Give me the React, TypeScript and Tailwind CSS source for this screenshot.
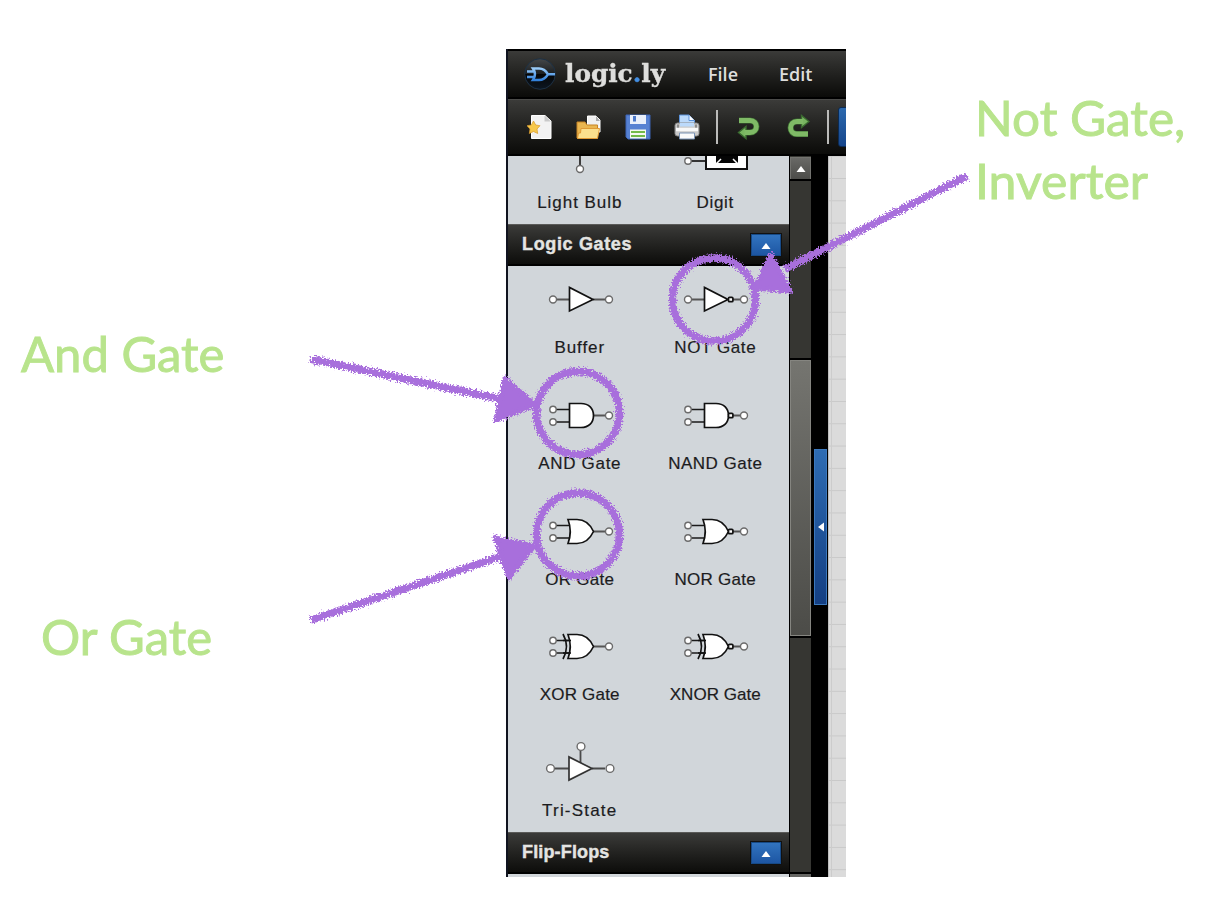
import type { ReactNode } from "react";

type Kind = "buffer" | "not" | "and" | "nand" | "or" | "nor" | "xor" | "xnor" | "tri";

const gates: { kind: Kind; label: string; tracking: string }[] = [
  { kind: "buffer", label: "Buffer", tracking: "tracking-[0.95px]" },
  { kind: "not", label: "NOT Gate", tracking: "tracking-[0.6px]" },
  { kind: "and", label: "AND Gate", tracking: "tracking-[0.7px]" },
  { kind: "nand", label: "NAND Gate", tracking: "tracking-[0.5px]" },
  { kind: "or", label: "OR Gate", tracking: "tracking-[0.3px]" },
  { kind: "nor", label: "NOR Gate", tracking: "tracking-[0.25px]" },
  { kind: "xor", label: "XOR Gate", tracking: "tracking-[0.2px]" },
  { kind: "xnor", label: "XNOR Gate", tracking: "tracking-[0.05px]" },
  { kind: "tri", label: "Tri-State", tracking: "tracking-[1.2px]" },
];

function Pin({ x, y, r = 3.5 }: { x: number; y: number; r?: number }) {
  return <circle cx={x} cy={y} r={r} fill="#fff" stroke="#6b6b6b" strokeWidth="1.4" />;
}

function GateIcon({ kind }: { kind: Kind }) {
  const negated = kind === "not" || kind === "nand" || kind === "nor" || kind === "xnor";
  const single = kind === "buffer" || kind === "not";
  const curved = kind === "or" || kind === "nor" || kind === "xor" || kind === "xnor";
  const exclusive = kind === "xor" || kind === "xnor";

  if (kind === "tri") {
    return (
      <svg width="70" height="40" viewBox="0 0 70 40" className="overflow-visible">
        <path d="M10 26.5H24M47 26.5H60M35.500 8V21" stroke="#4a4a4a" strokeWidth="1.8" />
        <path d="M24 15V38L47 26.500Z" fill="#fff" stroke="#333" strokeWidth="1.7" />
        <Pin x={5.5} y={26.5} r={3.9} />
        <Pin x={65} y={26.5} r={3.9} />
        <Pin x={36} y={4.500} r={3.9} />
      </svg>
    );
  }

  return (
    <svg width="70" height="40" viewBox="0 0 70 40" className="overflow-visible">
      <path d="M48 20.5H61" stroke="#555" strokeWidth="2" />
      {single ? (
        <path d="M11 20.500H24" stroke="#555" strokeWidth="2" />
      ) : (
        <path d="M11 14.500H26M11 27H26" stroke="#1a1a1a" strokeWidth="1.7" />
      )}
      {single && <path d="M24.500 8.500V32L48 20.500Z" fill="#fff" stroke="#111" strokeWidth="1.7" />}
      {!single && !curved && (
        <path d="M24.500 8.500H36C44 8.500 48.500 13.500 48.500 20.500S44 32.500 36 32.500H24.500Z" fill="#fff" stroke="#111" strokeWidth="1.7" />
      )}
      {curved && (
        <path d="M23 8.500H32C40 8.500 45 13 48.500 20.500C45 28 40 32.500 32 32.500H23Q27.500 20.500 23 8.500Z" fill="#fff" stroke="#111" strokeWidth="1.7" />
      )}
      {exclusive && <path d="M18 8Q25 20.500 18 33" fill="none" stroke="#111" strokeWidth="1.7" />}
      {exclusive && <path d="M18 14.500H26M18 27H26" stroke="#111" strokeWidth="1.7" />}
      {negated && <rect x="48.500" y="18.300" width="4.400" height="4.400" rx="1" fill="#fff" stroke="#111" strokeWidth="1.700" />}
      {single ? <Pin x={8} y={20.5} /> : (
        <>
          <Pin x={8} y={14.5} r={3.2} />
          <Pin x={8} y={27} r={3.2} />
        </>
      )}
      <Pin x={64} y={20.5} />
    </svg>
  );
}

function ItemLabel({ children, tracking }: { children: ReactNode; tracking: string }) {
  return <span className={`h-5 whitespace-nowrap text-[17px] leading-5 text-[#1c1c1e] [-webkit-text-stroke:0.2px_#1c1c1e] ${tracking}`}>{children}</span>;
}

function SectionHeader({ title, tracking }: { title: string; tracking: string }) {
  return (
    <div className="flex h-[42px] shrink-0 items-center justify-between border-t border-b-2 border-t-[#5a5a58] border-b-black bg-linear-to-b from-[#3b3b39] to-[#0d0d0b] pl-3.5 pr-2">
      <span className={`text-[18px] font-bold text-[#e4e4e2] [-webkit-text-stroke:0.4px_#e4e4e2] ${tracking}`}>{title}</span>
      <span className="flex h-[22px] w-[30px] items-center justify-center border border-[#174a86] bg-linear-to-b from-[#3274bf] to-[#1d56a3] outline outline-[#111]">
        <svg width="10" height="6" viewBox="0 0 10 6" className="mt-0.5"><path d="M5 0L9.500 6H.5Z" fill="#fff" /></svg>
      </span>
    </div>
  );
}

function Header() {
  return (
    <div className="flex h-[50px] shrink-0 items-center border-y-2 border-black bg-linear-to-b from-[#3b3b39] to-[#0b0b09] pl-[16px]">
      <svg width="32" height="32" viewBox="0 0 32 32" className="shrink-0">
        <defs>
          <linearGradient id="badge" x2="0" y2="1"><stop stopColor="#45484a" /><stop offset=".5" stopColor="#1b1e20" /><stop offset=".5" stopColor="#050607" /><stop offset="1" stopColor="#0d1722" /></linearGradient>
          <linearGradient id="gate" x1="0" y1="10" x2="0" y2="22" gradientUnits="userSpaceOnUse"><stop stopColor="#9ccdf9" /><stop offset="1" stopColor="#3382dc" /></linearGradient>
        </defs>
        <circle cx="16" cy="16" r="15.300" fill="url(#badge)" stroke="#1d3145" />
        <path d="M3 13.500H11M3 19H11M23 16.300H31M9 10.500H15C19 10.500 22 13 24 16.300C22 19.500 19 22 15 22H9Q13 16.300 9 10.500Z" fill="none" stroke="url(#gate)" strokeWidth="2.500" />
      </svg>
      <div className="ml-[9px] w-[101px] shrink-0">
        <span className="inline-block origin-left scale-x-[.99] whitespace-nowrap font-['DejaVu_Serif'] text-[25px] font-bold leading-[30px] text-[#dededc] [-webkit-text-stroke:0.4px]">
          logic<span className="text-[#438ee2]">.</span>ly
        </span>
      </div>
      <span className="ml-[42px] w-[71px] shrink-0 font-['Open_Sans'] text-[18px] font-semibold text-[#dededc]">File</span>
      <span className="shrink-0 font-['Open_Sans'] text-[18px] font-semibold text-[#dededc]">Edit</span>
    </div>
  );
}

function TurnArrow({ line, head }: { line: string; head: string }) {
  return (
    <svg width="24" height="26" viewBox="0 0 24 26" className="shrink-0">
      <path d={line} fill="none" stroke="#3a6a30" strokeWidth="6.2" />
      <path d={head} fill="#78b560" stroke="#3a6a30" strokeWidth="1.4" />
      <path d={line} fill="none" stroke="#7fba66" strokeWidth="4.8" />
    </svg>
  );
}

function Toolbar() {
  return (
    <div className="flex h-[57px] shrink-0 items-center overflow-hidden border-b-2 border-t border-b-black border-t-[#4b4b49] bg-linear-to-b from-[#3b3b39] to-[#0b0b09] pl-[19px]">
      <svg width="25" height="26" viewBox="0 0 25 26" className="shrink-0">
        <path d="M4.500 1.500H18L24 7V24.500H4.500Z" fill="#f2f2f2" stroke="#fff" />
        <path d="M17.500 1.500V7.500H24Z" fill="#c9c9c9" />
        <path d="M6.500 7L8.700 11L13 11.700L10 15L10.700 19.500L6.500 17.500L2.300 19.500L3 15L0 11.700L4.300 11Z" fill="#f6c84c" stroke="#d99a2b" strokeWidth=".7" />
      </svg>
      <svg width="25" height="26" viewBox="0 0 25 26" className="ml-6 shrink-0">
        <path d="M11.500 2H20L24 6V18H11.500Z" fill="#f0f0f0" stroke="#fff" />
        <path d="M20 2V7H24Z" fill="#aaa" />
        <path d="M1 8H9L11 11H21.500V24H1Z" fill="#e9b650" stroke="#c78425" />
        <path d="M5 14.500H23.500L21.500 24.500H1.500L2.500 19H4.500Z" fill="#fbe08e" stroke="#e09a35" />
      </svg>
      <svg width="26" height="26" viewBox="0 0 26 26" className="ml-[24px] shrink-0">
        <path d="M1 1H25V25H3L1 23Z" fill="#5681d2" stroke="#3c65b6" />
        <rect x="5" y="1" width="16" height="9" fill="#e9effa" />
        <path d="M8 2H11V7.500H8Z" fill="#4c79cb" />
        <path d="M5 15.500H21V24.500H5Z" fill="#f5f8ef" />
        <path d="M6 18H20M6 22H20" stroke="#73ba48" strokeWidth="2.200" />
      </svg>
      <svg width="26" height="26" viewBox="0 0 26 26" className="ml-[23px] shrink-0">
        <path d="M5.500 13V1H15L20.500 6.500V13Z" fill="#bcdafb" stroke="#5c93da" />
        <path d="M15 1V6.500H20.500" fill="#fff" stroke="#5c93da" />
        <rect x="1" y="9" width="24" height="13" rx="2.5" fill="#c9c9c9" stroke="#8a8a8a" />
        <path d="M6 9H20V12.500H6Z" fill="#bcdafb" />
        <path d="M3 10.500H5V15H3ZM21 10.500H23V15H21Z" fill="#8a8a8a" />
        <path d="M2 15.500H24" stroke="#f8f8f8" strokeWidth="3.5" />
        <path d="M5.500 19H20.500V25H5.500Z" fill="#fafafa" stroke="#7a93b5" />
      </svg>
      <span className="ml-4 h-[34px] w-0.5 shrink-0 bg-[#bcbcba]" />
      <div className="ml-[19px] flex shrink-0 gap-[25px]">
        <TurnArrow line="M2 6.500H13C21.500 6.500 21.500 18.500 13 18.500H7.500" head="M9 12.500V24.500L1.500 18.500Z" />
        <TurnArrow line="M17 7.500H11C2.500 7.500 2.500 20 11 20H22" head="M15.500 1.500V13.500L23 7.500Z" />
      </div>
      <span className="ml-[17px] h-[34px] w-0.5 shrink-0 bg-[#bcbcba]" />
      <span className="ml-[9px] h-10 w-10 shrink-0 rounded-[3px] border border-[#0b2b55] bg-linear-to-b from-[#2c69ae] to-[#17468c]" />
    </div>
  );
}

function Palette() {
  return (
    <div className="flex w-[281px] shrink-0 flex-col overflow-hidden bg-[#d1d6da]">
      <div className="flex h-[68px] shrink-0 pl-1">
        <div className="flex w-[135.5px] flex-col items-center">
          <svg width="70" height="37" viewBox="0 0 70 37">
            <path d="M35 0V11" stroke="#3b3b3b" strokeWidth="2" /><Pin x={35} y={13} />
          </svg>
          <ItemLabel tracking="tracking-[0.95px]">Light Bulb</ItemLabel>
        </div>
        <div className="flex w-[135.5px] flex-col items-center">
          <svg width="70" height="37" viewBox="0 0 70 37">
            <path d="M11 5H26" stroke="#222" strokeWidth="1.800" /><Pin x={8} y={5} r={3.2} />
            <path d="M26 -4H67V13H26Z" fill="#fff" stroke="#111" strokeWidth="2" />
            <path d="M36 0H58V7H36Z" fill="#050505" />
            <path d="M36.500 7.500L41 3M57.500 7.500L53 3" stroke="#fff" strokeWidth="1.500" />
          </svg>
          <ItemLabel tracking="tracking-[0.65px]">Digit</ItemLabel>
        </div>
      </div>
      <SectionHeader title="Logic Gates" tracking="tracking-[0.65px]" />
      <div className="grid h-[566px] shrink-0 grid-cols-[135.5px_135.5px] grid-rows-[116px_116px_115px_116px_116px] content-start overflow-hidden pl-1">
        {gates.map((g) => (
          <div key={g.kind} className="flex flex-col items-center pt-[13px]">
            <GateIcon kind={g.kind} />
            <span className="mt-[19px] flex"><ItemLabel tracking={g.tracking}>{g.label}</ItemLabel></span>
          </div>
        ))}
      </div>
      <SectionHeader title="Flip-Flops" tracking="tracking-[0.15px]" />
    </div>
  );
}

function Scrollbar() {
  return (
    <div className="flex w-[23px] shrink-0 flex-col border-x border-black bg-[#363632]">
      <div className="mt-px flex h-[22px] shrink-0 items-center justify-center border border-b-0 border-[#73736f] bg-linear-to-b from-[#696966] to-[#4c4c49]">
        <svg width="10" height="6" viewBox="0 0 10 6"><path d="M5 0L9.500 6H.5Z" fill="#fff" /></svg>
      </div>
      <div className="h-[181px] shrink-0 border-y-2 border-black" />
      <div className="h-[276px] shrink-0 border border-[#858580] bg-linear-to-b from-[#757570] to-[#4c4c48]" />
      <div className="h-[238px] shrink-0 border-y-2 border-black" />
      <div className="flex-1 bg-[#666663]" />
    </div>
  );
}

function Splitter() {
  return (
    <div className="w-[16px] shrink-0 bg-black pl-[2px] pt-[293px]">
      <div className="flex h-[156px] w-[13px] items-center justify-center border border-[#3b78bd] bg-linear-to-b from-[#2e6cb3] to-[#143f83]">
        <svg width="6" height="10" viewBox="0 0 6 10"><path d="M0 5L6 .5V9.500Z" fill="#fff" /></svg>
      </div>
    </div>
  );
}

function Annotations() {
  return (
    <svg width="1212" height="916" viewBox="0 0 1212 916" className="pointer-events-none absolute left-0 top-0">
      <defs>
        <filter id="crayon" filterUnits="userSpaceOnUse" x="0" y="0" width="1212" height="916" colorInterpolationFilters="sRGB">
          <feTurbulence type="fractalNoise" baseFrequency=".62" numOctaves="2" seed="7" result="noise" />
          <feDisplacementMap in="SourceGraphic" in2="noise" scale="8" xChannelSelector="R" yChannelSelector="G" />
        </filter>
      </defs>
      <g filter="url(#crayon)" stroke="#a86fdc" fill="none" strokeWidth="7.500" strokeLinejoin="round">
        <circle cx="714" cy="299.500" r="41.500" />
        <circle cx="578" cy="413" r="41.500" />
        <circle cx="578" cy="534.500" r="41.500" />
        <path d="M311 359L500 399M311 620L502 556M967 176L785 269" />
        <g fill="#a86fdc" strokeWidth="5">
          <path d="M505 379L496 420L535 405Z" />
          <path d="M495 538L509 578L534 546Z" />
          <path d="M771 255L790 291L755 288Z" />
        </g>
      </g>
    </svg>
  );
}

export default function App() {
  return (
    <div className="relative flex h-[916px] w-[1212px] overflow-hidden bg-white font-['Liberation_Sans',sans-serif]">
      <div className="flex w-[506px] shrink-0 flex-col whitespace-nowrap pt-[323px] font-['Lato'] text-[49px] leading-[60px] text-[#b8e48c] [-webkit-text-stroke:0.9px_#b8e48c]">
        <span className="ml-[21px] origin-left self-start">And Gate</span>
        <span className="ml-[41px] mt-[223px] origin-left self-start">Or Gate</span>
      </div>
      <div className="mt-[49px] flex h-[828px] w-[340px] shrink-0 flex-col overflow-hidden border-l-2 border-[#10131f] bg-black">
        <Header />
        <Toolbar />
        <div className="flex min-h-0 flex-1">
          <Palette />
          <Scrollbar />
          <Splitter />
          <div className="flex-1 border-l border-[#bdbdbd] bg-[#dbdbdb] bg-[linear-gradient(to_right,transparent_2px,#cccccc_2px,#cccccc_3px,transparent_3px),linear-gradient(to_bottom,#c9c9c9_1px,transparent_1px)] bg-[size:100%_100%,100%_22.300px] bg-[position:0_0,0_22px]" />
        </div>
      </div>
      <div className="flex flex-1 flex-col whitespace-nowrap pl-[129px] pt-[86px] font-['Lato'] text-[49px] leading-[63px] text-[#b8e48c] [-webkit-text-stroke:0.9px_#b8e48c]">
        <span className="origin-left scale-x-[1.01] self-start">Not Gate,</span>
        <span className="origin-left scale-x-[1.02] self-start">Inverter</span>
      </div>
      <Annotations />
    </div>
  );
}
